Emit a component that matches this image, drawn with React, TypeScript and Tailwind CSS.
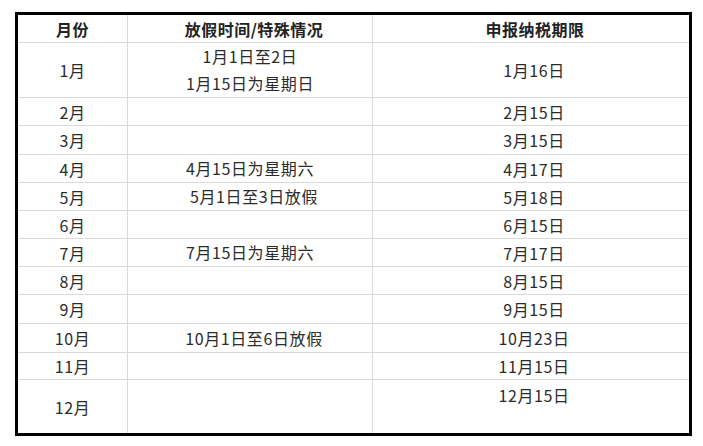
import React from "react";

type Row = {
    month: string;
    note?: string[];
    deadline: string;
    h: string;
    noteShift?: boolean;
    top?: boolean;
};

const rows: Row[] = [
    { month: "1月", note: ["1月1日至2日", "1月15日为星期日"], deadline: "1月16日", h: "h-[55px]" },
    { month: "2月", deadline: "2月15日", h: "h-[28px]" },
    { month: "3月", deadline: "3月15日", h: "h-[29px]" },
    { month: "4月", note: ["4月15日为星期六"], deadline: "4月17日", h: "h-[28px]" },
    { month: "5月", note: ["5月1日至3日放假"], deadline: "5月18日", h: "h-[28px]", noteShift: true },
    { month: "6月", deadline: "6月15日", h: "h-[28px]" },
    { month: "7月", note: ["7月15日为星期六"], deadline: "7月17日", h: "h-[28px]" },
    { month: "8月", deadline: "8月15日", h: "h-[28px]" },
    { month: "9月", deadline: "9月15日", h: "h-[29px]" },
    { month: "10月", note: ["10月1日至6日放假"], deadline: "10月23日", h: "h-[29px]", noteShift: true },
    { month: "11月", deadline: "11月15日", h: "h-[27px]" },
    { month: "12月", deadline: "12月15日", h: "h-[53px]", top: true },
];

const App = () => {
    return (
        <div
            className="min-h-[446px] bg-white pl-[15px] pt-[12px] text-[16px] tracking-[0.6px] text-[#2b2b2b]"
            style={{ fontFamily: '"Noto Sans CJK SC", "Noto Sans", sans-serif' }}
        >
            <div className="flex w-[677px] h-[424px] flex-col border-[3px] border-black">
                <div className="flex h-[28px] shrink-0 border-b border-[#d9d9d9] font-bold tracking-[0.5px] text-[#222]">
                    <div className="flex w-[110px] items-center justify-center border-r border-[#d9d9d9]">月份</div>
                    <div className="flex w-[245px] items-center justify-center border-r border-[#d9d9d9] pl-[8px]">
                        放假时间/特殊情况
                    </div>
                    <div className="flex w-[316px] items-center justify-center pl-[8px]">申报纳税期限</div>
                </div>

                {rows.map((r, i) => (
                    <div
                        key={r.month}
                        className={`flex shrink-0 ${r.h} ${i < rows.length - 1 ? "border-b border-[#d9d9d9]" : ""}`}
                    >
                        <div className="flex w-[110px] items-center justify-center border-r border-[#d9d9d9]">
                            {r.month}
                        </div>
                        <div
                            className={`flex w-[245px] flex-col items-center justify-center border-r border-[#d9d9d9] leading-[27px] ${
                                r.noteShift ? "pl-[8px]" : ""
                            }`}
                        >
                            {r.note?.map((n) => (
                                <span key={n}>{n}</span>
                            ))}
                        </div>
                        <div
                            className={`flex w-[316px] justify-center pl-[6px] ${
                                r.top ? "items-start pt-[3px]" : "items-center"
                            }`}
                        >
                            {r.deadline}
                        </div>
                    </div>
                ))}
            </div>
        </div>
    );
};

export default App;
